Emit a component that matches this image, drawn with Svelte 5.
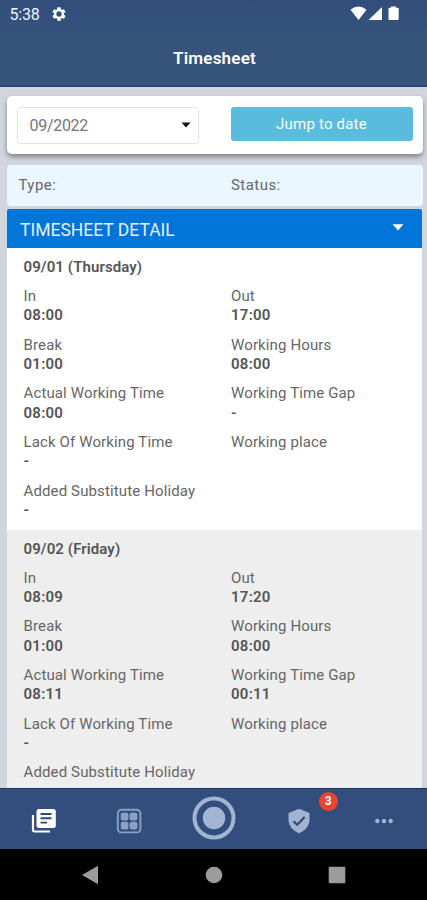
<script>
  const days = [
    {
      date: '09/01 (Thursday)',
      rows: [
        ['In', '08:00', 'Out', '17:00'],
        ['Break', '01:00', 'Working Hours', '08:00'],
        ['Actual Working Time', '08:00', 'Working Time Gap', '-'],
        ['Lack Of Working Time', '-', 'Working place', ''],
        ['Added Substitute Holiday', '-', '', '']
      ]
    },
    {
      date: '09/02 (Friday)',
      rows: [
        ['In', '08:09', 'Out', '17:20'],
        ['Break', '01:00', 'Working Hours', '08:00'],
        ['Actual Working Time', '08:11', 'Working Time Gap', '00:11'],
        ['Lack Of Working Time', '-', 'Working place', ''],
        ['Added Substitute Holiday', '', '', '']
      ]
    }
  ];
</script>

<div class="phone">
  <header>
    <div class="status">
      <span class="clock">5:38</span>
      <svg class="gear" width="16" height="16" viewBox="0 0 24 24"><path fill="#fff" fill-rule="evenodd" d="M19.4 13a7.500 7.500 0 0 0 0-2l2.100-1.650a.5.500 0 0 0 .12-.64l-2-3.460a.5.500 0 0 0-.6-.22l-2.500 1a7.300 7.300 0 0 0-1.700-1L14.450 2.400A.5.500 0 0 0 14 2h-4a.5.500 0 0 0-.5.420L9.100 5.070a7.700 7.700 0 0 0-1.690.98l-2.490-1a.5.500 0 0 0-.6.220l-2 3.460a.5.500 0 0 0 .12.640L4.600 11a7.900 7.900 0 0 0 0 2l-2.110 1.650a.5.500 0 0 0-.12.640l2 3.460c.12.220.39.300.6.220l2.490-1c.52.400 1.080.73 1.690.98l.38 2.650c.03.240.24.400.49.400h4c.25 0 .46-.18.490-.42l.38-2.650a7.700 7.700 0 0 0 1.690-.98l2.490 1c.23.090.49 0 .6-.22l2-3.460a.5.500 0 0 0-.12-.64zM12 16a4 4 0 1 1 0-8 4 4 0 0 1 0 8z"/></svg>
      <svg class="signals" width="50" height="16" viewBox="0 0 50 16" fill="#fff">
        <path d="M.5 3.700Q8.500-2.800 16.500 3.700L8.500 14z"/>
        <path d="M32 1v13H18.500z"/>
        <path d="M41 .5h5v1.300h1.700q1 0 1 1V13q0 1-1 1h-8.200q-1 0-1-1V2.800q0-1 1-1H41z"/>
      </svg>
    </div>
    <h1>Timesheet</h1>
  </header>

  <main>
    <section class="filter">
      <button class="select">09/2022<svg width="10" height="6" viewBox="0 0 10 6"><path d="M.5.500h9L5 5.500z" fill="#111"/></svg></button>
      <button class="jump">Jump to date</button>
    </section>
    <section class="summary"><span>Type:</span><span>Status:</span></section>
    <section class="detail">
      <h2>TIMESHEET DETAIL<svg width="12" height="7" viewBox="0 0 12 7"><path d="M.5.300h11L6 6.500z" fill="#fff"/></svg></h2>
      {#each days as day}
        <article>
          <h3>{day.date}</h3>
          {#each day.rows as [l1, v1, l2, v2]}
            <div class="row">
              <div><span>{l1}</span><b>{v1}</b></div>
              <div><span>{l2}</span><b>{v2}</b></div>
            </div>
          {/each}
        </article>
      {/each}
    </section>
  </main>

  <nav class="tabs">
    <div>
      <svg width="26" height="26" viewBox="0 0 26 26">
        <path d="M2 7v15.200q0 1.300 1.300 1.300H19" fill="none" stroke="#fff" stroke-width="2.200"/>
        <rect x="5.500" y="1" width="19.300" height="19" rx="2.500" fill="#fff"/>
        <path d="M9.500 6h11M9.500 10.300h11M9.500 14.600h6.500" stroke="#2f4b79" stroke-width="1.900"/>
      </svg>
    </div>
    <div>
      <svg width="26" height="26" viewBox="0 0 26 26">
        <rect x="1.800" y="1.800" width="22.600" height="22.600" rx="3.500" fill="none" stroke="#8ba0c4" stroke-width="1.900"/>
        <g fill="#8ba0c4"><rect x="4.800" y="4.800" width="7.700" height="7.700" rx="2"/><rect x="13.700" y="4.800" width="7.700" height="7.700" rx="2"/><rect x="4.800" y="13.700" width="7.700" height="7.700" rx="2"/><rect x="13.700" y="13.700" width="7.700" height="7.700" rx="2"/></g>
      </svg>
    </div>
    <div class="record">
      <svg width="44" height="44" viewBox="0 0 44 44"><circle cx="22" cy="22" r="19.500" fill="none" stroke="#a2b4d3" stroke-width="4"/><circle cx="22" cy="22" r="11.200" fill="#a2b4d3"/></svg>
    </div>
    <div class="approve">
      <svg width="24" height="26" viewBox="0 0 24 26"><path d="M12 .8 22.500 5v7.500Q22 21 12 25.300 2 21 1.500 12.500V5z" fill="#a2b4d3"/><path d="m6.500 13.200 3.700 3.500 7.500-7.700" fill="none" stroke="#2f4b79" stroke-width="2.200"/></svg>
      <span class="badge">3</span>
    </div>
    <div>
      <svg width="20" height="6" viewBox="0 0 20 6" fill="#a2b4d3"><circle cx="3.300" cy="3" r="2.200"/><circle cx="10" cy="3" r="2.200"/><circle cx="16.700" cy="3" r="2.200"/></svg>
    </div>
  </nav>

  <footer>
    <svg width="18" height="20" viewBox="0 0 18 20"><path d="M17 .8v18.400L1 10z" fill="#9c9c9c"/></svg>
    <svg width="18" height="18" viewBox="0 0 18 18"><circle cx="9" cy="9" r="8.300" fill="#9c9c9c"/></svg>
    <svg width="18" height="18" viewBox="0 0 18 18"><rect x=".7" y=".7" width="16.600" height="16.600" rx="1" fill="#9c9c9c"/></svg>
  </footer>
</div>

<style>
  :global(body) { margin: 0; }
  .phone {
    width: 427px; height: 900px; overflow: hidden;
    display: flex; flex-direction: column;
    font-family: Roboto, "Liberation Sans", sans-serif;
    font-size: 15px; color: #666; background: #d2d5dd;
  }
  .phone * { box-sizing: border-box; }
  svg { display: block; flex: none; }
  header {
    height: 87px; flex: none; color: #fff;
    background: linear-gradient(#324d7b 0, #36537c 35px, #36537c 100%);
    border-bottom: 2px solid #25436f;
  }
  .status { display: flex; align-items: center; height: 28px; padding: 0 27px 0 9.500px; }
  .clock { font-size: 16px; width: 41px; color: #eef3fc; letter-spacing: -.2px; }
  .signals { margin-left: auto; }
  h1 { margin: 18px 0 0; padding-left: 2px; text-align: center; font-size: 17px; line-height: 24px; font-weight: 600; letter-spacing: .2px; }
  main { height: 701px; flex: none; overflow: hidden; padding: 9px 4.500px 0 6.500px; }
  .filter {
    display: flex; align-items: flex-start; justify-content: space-between;
    height: 58px; padding: 11px 10px 0; border-radius: 5px; background: #fff;
    box-shadow: 0 3px 5px rgba(0, 0, 0, .38);
  }
  button { font: inherit; }
  .select {
    width: 182px; height: 37px; display: flex; align-items: center; justify-content: space-between;
    padding: 0 7px 1px 12px; border: 1px solid #e3e3e3; border-radius: 4px; background: #fff;
    color: #757575; font-size: 16px; letter-spacing: -.3px;
  }
  .jump { width: 182px; height: 34px; border: 0; border-radius: 3px; background: #5abcdc; color: #fff; letter-spacing: .2px; padding: 0 0 1px; }
  .summary {
    display: flex; align-items: center; height: 41px; margin-top: 11px; padding: 0 12px 2px;
    background: #eaf7ff; border-radius: 4px; letter-spacing: .45px;
  }
  .summary span { flex: 0 0 212.500px; }
  .detail { margin: 3px 1px 0 .5px; }
  h2 {
    display: flex; align-items: center; justify-content: space-between;
    height: 39px; margin: 0; padding: 2px 18px 0 13px; background: #0275d8; color: #e4f0fd;
    font-size: 17.500px; font-weight: 400; border-radius: 2px 2px 0 0;
  }
  h2 svg { margin-top: -4px; }
  article { height: 281.700px; padding: 10.200px 16px 0 16.500px; background: #fff; }
  article:nth-of-type(even) { background: #eee; }
  h3 { margin: 0 0 9.200px; font-size: 15px; line-height: 19.500px; font-weight: 600; color: #555; letter-spacing: .1px; }
  .row { display: grid; grid-template-columns: 207.500px 1fr; height: 48.700px; line-height: 19.500px; }
  .row span, .row b { display: block; height: 19.500px; white-space: nowrap; letter-spacing: .13px; }
  .row b { font-weight: 600; color: #555; letter-spacing: .25px; }
  .tabs {
    height: 61px; flex: none; display: grid; grid-template-columns: repeat(5, 1fr);
    background: #334e7c; border-top: 1px solid #17376a;
    padding: 4px 0 0 1px;
  }
  .tabs > div { display: flex; align-items: center; justify-content: center; position: relative; }
  .tabs .record { padding-bottom: 6px; }
  .badge {
    position: absolute; left: 62px; top: -1px; width: 19px; height: 19px; border-radius: 50%;
    background: #e6452f; color: #fff; font-size: 12px; font-weight: 700; line-height: 19px; text-align: center;
  }
  footer {
    height: 51px; flex: none; display: flex; align-items: center; justify-content: space-between;
    padding: 0 81px; background: #000;
  }
</style>
